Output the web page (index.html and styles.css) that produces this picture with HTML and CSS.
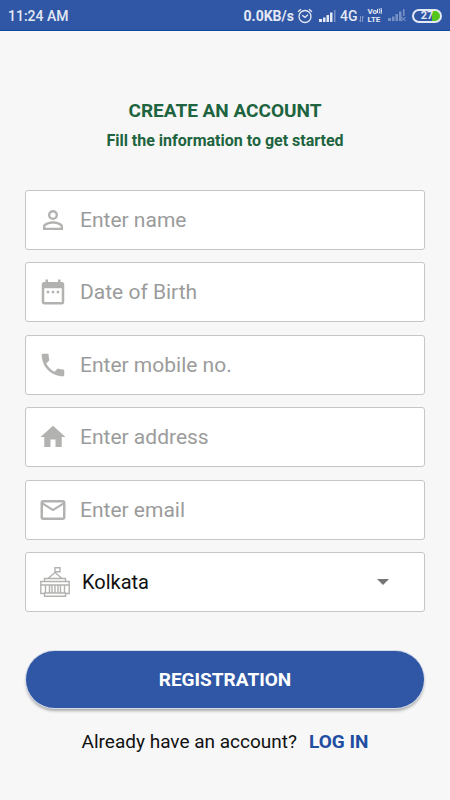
FILE: index.html
```html
<!DOCTYPE html>
<html lang="en">
<head>
<meta charset="utf-8">
<meta name="viewport" content="width=device-width, initial-scale=1">
<title>Create an account</title>
<link rel="stylesheet" href="styles.css">
</head>
<body>
<header class="status">
  <span class="time">11:24 AM</span>
  <div class="status-icons">
    <span class="speed">0.0KB/s</span>
    <svg class="alarm" width="16" height="16" viewBox="0 0 16 16" fill="none" stroke="currentColor" stroke-width="1.3"><circle cx="8" cy="8.5" r="6"/><path d="M5.2 7.2 8 9.3l3-2.5M1 3.8 4 1.2M15 3.8l-3-2.6"/></svg>
    <svg class="signal" width="17" height="12" viewBox="0 0 17 12"><path fill="currentColor" d="M0 9h3v3H0zM4 7.500h2.500V12H4zM7.500 5h2.500v7H7.500zM11 2.500h2.500V12H11z"/><path fill="currentColor" opacity=".4" d="M15 0h1.500v12H15z"/></svg>
    <span class="network">4G</span>
    <svg class="data" width="5" height="6" viewBox="0 0 5 6"><path fill="currentColor" opacity=".45" d="M1 0h1v6H1L0 4h1zM3 0h1l1 2H4v4H3z"/></svg>
    <span class="volte"><span class="volte-top">Vo<svg width="5" height="6" viewBox="0 0 5 6" fill="none" stroke="currentColor"><path d="M.5 1v4M2 .5q2 2.500 0 5M4 0q1 3 0 6"/></svg></span><span>LTE</span></span>
    <svg class="signal-off" width="18" height="13" viewBox="0 0 18 13"><path fill="currentColor" opacity=".4" d="M0 9h3v3H0zM4 7.500h2.500V12H4zM7.500 5h2.500v7H7.500zM11 2.500h2.500V12H11zM15 0h1.500v7H15z"/><path stroke="currentColor" opacity=".5" d="m13.500 8 4 4m0-4-4 4"/></svg>
    <span class="battery"><span>27</span></span>
  </div>
</header>
<main class="page">
  <h1>CREATE AN ACCOUNT</h1>
  <p class="subtitle">Fill the information to get started</p>
  <form>
    <div class="fields">
      <label class="field">
        <svg class="icon" viewBox="0 0 24 24"><path d="M12 5.900a2.100 2.100 0 1 1 0 4.200 2.100 2.100 0 0 1 0-4.200m0 9c2.970 0 6.100 1.460 6.100 2.100v1.100H5.900V17c0-.640 3.130-2.100 6.100-2.100M12 4a4 4 0 1 0 0 8 4 4 0 0 0 0-8zm0 9c-2.670 0-8 1.340-8 4v3h16v-3c0-2.660-5.330-4-8-4z"/></svg>
        <input type="text" placeholder="Enter name" aria-label="Name">
      </label>
      <label class="field">
        <svg class="icon" viewBox="0 0 24 24"><path d="M9 11H7v2h2v-2zm4 0h-2v2h2v-2zm4 0h-2v2h2v-2zm2-7h-1V2h-2v2H8V2H6v2H5a2 2 0 0 0-2 2v14c0 1.100.9 2 2 2h14a2 2 0 0 0 2-2V6a2 2 0 0 0-2-2zm0 16H5V9h14v11z"/></svg>
        <input type="text" placeholder="Date of Birth" aria-label="Date of birth">
      </label>
      <label class="field">
        <svg class="icon" viewBox="0 0 24 24"><path d="M6.620 10.790a15.150 15.150 0 0 0 6.590 6.590l2.200-2.200c.270-.270.670-.360 1.020-.240 1.120.370 2.330.570 3.570.570.550 0 1 .450 1 1V20c0 .550-.450 1-1 1C10.610 21 3 13.390 3 4c0-.550.450-1 1-1h3.500c.550 0 1 .450 1 1 0 1.250.200 2.450.570 3.570.110.350.030.740-.250 1.020l-2.200 2.200z"/></svg>
        <input type="tel" placeholder="Enter mobile no." aria-label="Mobile number">
      </label>
      <label class="field">
        <svg class="icon" viewBox="0 0 24 24"><path d="M10 20v-6h4v6h5v-8h3L12 3 2 12h3v8z"/></svg>
        <input type="text" placeholder="Enter address" aria-label="Address">
      </label>
      <label class="field">
        <svg class="icon" viewBox="0 0 24 24"><path d="M20 4H4c-1.100 0-2 .9-2 2v12c0 1.100.9 2 2 2h16c1.100 0 2-.9 2-2V6c0-1.100-.9-2-2-2zm0 14H4V8l8 5 8-5v10zm-8-7L4 6h16l-8 5z"/></svg>
        <input type="email" placeholder="Enter email" aria-label="Email">
      </label>
      <label class="field city">
        <svg class="icon-city" viewBox="0 0 30 30"><path d="M15 6V.8h5v4h-5M15 5.500 8 11.500M15 5.500l7 6M4.500 11.500h21v3h-21zM.8 14.500h28.400v3.500H.8zM.8 17.500v9h4M29.200 17.500v9h-4M5.500 18v8M24.500 18v8M9.500 18v8M12 18v8M18 18v8M20.500 18v8M15 18v8M4.500 26h21v3.200h-21z"/></svg>
        <select aria-label="City"><option>Kolkata</option></select>
        <svg class="arrow" width="12" height="6" viewBox="0 0 12 6"><path d="M0 0h12L6 6z"/></svg>
      </label>
    </div>
    <button type="submit">REGISTRATION</button>
  </form>
  <p class="login">Already have an account? <a href="#login">LOG IN</a></p>
</main>
</body>
</html>
```
FILE: styles.css
```css
* { box-sizing: border-box; }

body {
  margin: 0;
  background: #f7f7f7;
  color: #111;
  font-family: Roboto, "Liberation Sans", sans-serif;
}

.status {
  display: flex;
  align-items: center;
  justify-content: space-between;
  height: 31px;
  padding: 1px 8px 0;
  background: #3057a6;
  border-bottom: 1px solid #0d479f;
  color: #e4e9f4;
  font-size: 14px;
  font-weight: 500;
}

.status-icons { display: flex; align-items: center; }
.speed { margin-right: 3px; font-weight: 700; }
.alarm { margin-right: 6px; }
.signal { margin-right: 4px; }
.data { margin: 6px 3px 0 2px; }

.volte {
  display: grid;
  margin-right: 6px;
  font-size: 8px;
  font-weight: 700;
  line-height: 8px;
}

.volte-top { display: flex; height: 8px; }

.signal-off { margin-right: 6px; }

.battery {
  display: grid;
  place-items: center;
  width: 30px;
  height: 14px;
  border: 2px solid #e4e9f4;
  border-radius: 7px;
  background: linear-gradient(90deg, transparent 70%, #55c51b 70%);
  font-size: 11px;
  font-weight: 700;
  line-height: 10px;
}

.page { padding: 68px 25px 24px; }

h1 {
  margin: 0;
  color: #1d643f;
  font-size: 19px;
  font-weight: 700;
  line-height: 24px;
  text-align: center;
}

.subtitle {
  margin: 8px 0 39px;
  color: #1d643f;
  font-size: 16px;
  font-weight: 700;
  line-height: 20px;
  text-align: center;
}

.fields {
  display: grid;
  align-content: space-between;
  min-height: 422px;
}

.field {
  display: flex;
  align-items: center;
  height: 60px;
  padding: 0 12px;
  border: 1px solid #c6c6c6;
  border-radius: 3px;
  background: #fff;
}

.icon {
  flex: none;
  width: 30px;
  height: 30px;
  margin-right: 12px;
  fill: #b2b2b0;
}

.icon-city {
  flex: none;
  width: 30px;
  height: 30px;
  margin: 0 12px 0 2px;
  fill: none;
  stroke: #b2b2b0;
  stroke-width: 1.4;
}

input,
select {
  flex: 1;
  min-width: 0;
  height: 100%;
  padding: 0;
  border: 0;
  outline: 0;
  background: transparent;
  color: #111;
  font-family: inherit;
  font-size: 21px;
}

input::placeholder { color: #9b9b9b; opacity: 1; }
select { appearance: none; font-size: 20px; }

.arrow {
  flex: none;
  margin-right: 23px;
  fill: #757575;
}

form { padding: 0; }

button {
  display: block;
  width: calc(100% - 2px);
  height: 57px;
  margin: 39px auto 0;
  border: 0;
  border-radius: 29px;
  background: #3057a6;
  box-shadow: 0 0 0 1px #d5dbe8, 0 3px 3px #aaa;
  color: #fff;
  font-family: inherit;
  font-size: 19px;
  font-weight: 700;
}

.login {
  display: flex;
  justify-content: center;
  gap: 12px;
  margin: 22px 0 0;
  font-size: 19px;
  line-height: 24px;
}

.login a {
  color: #214da0;
  font-weight: 700;
  text-decoration: none;
}
```
